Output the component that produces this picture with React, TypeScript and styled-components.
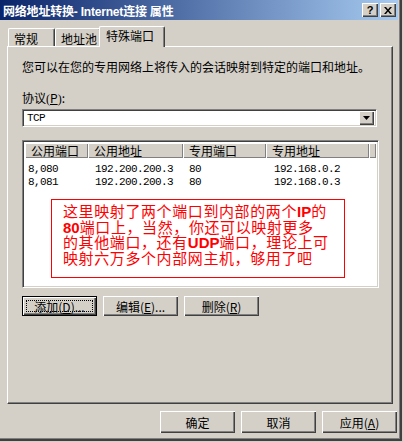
import React from "react";
import styled, { createGlobalStyle } from "styled-components";

const GlobalStyle = createGlobalStyle`
  html, body {
    margin: 0;
    padding: 0;
    background: #d4d0c8;
  }
  body {
    font-family: "Noto Sans CJK SC", "Liberation Sans", sans-serif;
    font-size: 12px;
    color: #000000;
  }
`;

const Window = styled.div`
  width: 403px;
  height: 442px;
  box-sizing: border-box;
  padding: 0 5px 4px 0;
  background: #d4d0c8;
  display: flex;
  flex-direction: column;
  box-shadow: inset -1px -1px #d4d0c8, inset -3px -3px #404040,
    inset -4px -4px #808080;
`;

const TitleBar = styled.div`
  height: 20px;
  display: flex;
  align-items: center;
  justify-content: space-between;
  padding: 0 2px 0 3px;
  background: linear-gradient(to right, #0a246a, #a6caf0);
`;

const Title = styled.span`
  color: #ffffff;
  font-weight: 700;
  font-size: 12px;
  font-family: "Liberation Sans", "Noto Sans CJK SC", sans-serif;
  letter-spacing: -0.2px;
`;

const TitleButtons = styled.div`
  display: flex;
  gap: 2px;
`;

const CaptionButton = styled.div`
  width: 16px;
  height: 14px;
  box-sizing: border-box;
  background: #d4d0c8;
  display: flex;
  align-items: center;
  justify-content: center;
  font: 700 11px "Liberation Sans", sans-serif;
  box-shadow: inset 1px 1px #ffffff, inset -1px -1px #404040,
    inset -2px -2px #808080;
`;

const Body = styled.div`
  padding: 6px 0 0 7px;
  display: flex;
  flex-direction: column;
`;

const TabStrip = styled.div`
  display: flex;
  align-items: flex-end;
  height: 20px;
  padding-left: 1px;
  position: relative;
  z-index: 1;
`;

const Tab = styled.div<{ $active?: boolean; $w: number }>`
  width: ${(p) => p.$w}px;
  height: ${(p) => (p.$active ? 21 : 18)}px;
  box-sizing: border-box;
  margin: ${(p) => (p.$active ? "0 -2px -1px -2px" : "0")};
  padding: ${(p) => (p.$active ? "1px 0 0 6px" : "2px 0 0 5px")};
  background: #d4d0c8;
  border-top: 1px solid #ffffff;
  border-left: 1px solid #ffffff;
  border-right: 1px solid #404040;
  border-radius: 2px 2px 0 0;
  box-shadow: inset -1px 0 #808080;
  line-height: 16px;
  white-space: nowrap;
`;

const Panel = styled.div`
  width: 386px;
  height: 358px;
  box-sizing: border-box;
  padding: 13px 13px 0 14px;
  border-top: 1px solid #ffffff;
  border-left: 1px solid #ffffff;
  border-right: 1px solid #404040;
  border-bottom: 1px solid #404040;
  box-shadow: inset -1px -1px #808080;
  display: flex;
  flex-direction: column;
`;

const Line = styled.div<{ $mt?: number }>`
  margin-top: ${(p) => p.$mt || 0}px;
  line-height: 14px;
  white-space: nowrap;
`;

const Sunken = styled.div`
  box-sizing: border-box;
  border: 1px solid;
  border-color: #808080 #ffffff #ffffff #808080;
  box-shadow: inset 1px 1px #404040, inset -1px -1px #d4d0c8;
  background: #ffffff;
`;

const Combo = styled(Sunken)`
  width: 355px;
  height: 18px;
  margin-top: 3px;
  padding: 2px 2px 2px 4px;
  display: flex;
  align-items: center;
  justify-content: space-between;
`;

const Mono = styled.span`
  font-family: "Liberation Mono", monospace;
  font-size: 11px;
  letter-spacing: -0.6px;
`;

const DropButton = styled.div`
  width: 15px;
  height: 14px;
  box-sizing: border-box;
  background: #d4d0c8;
  display: flex;
  align-items: center;
  justify-content: center;
  box-shadow: inset 1px 1px #ffffff, inset -1px -1px #404040,
    inset -2px -2px #808080;
`;

const List = styled(Sunken)`
  width: 357px;
  height: 148px;
  margin-top: 13px;
  padding: 2px;
  position: relative;
`;

const Header = styled.div`
  display: flex;
  height: 15px;
`;

const HeadCell = styled.div<{ $w?: number }>`
  ${(p) => (p.$w ? `width: ${p.$w}px;` : "flex: 1;")}
  box-sizing: border-box;
  background: #d4d0c8;
  padding-left: 6px;
  line-height: 15px;
  box-shadow: inset 1px 1px #ffffff, inset -1px -1px #808080;
`;

const Rows = styled.div`
  padding-top: 2px;
`;

const Row = styled.div`
  display: flex;
  height: 13px;
  line-height: 13px;
`;

const Cell = styled.div<{ $w: number; $pl: number }>`
  width: ${(p) => p.$w}px;
  padding-left: ${(p) => p.$pl}px;
  box-sizing: border-box;
  white-space: nowrap;
`;

const Note = styled.div`
  position: absolute;
  left: 28px;
  top: 58px;
  width: 294px;
  height: 79px;
  box-sizing: border-box;
  border: 1px solid #ff0000;
  padding: 4px 0 0 11px;
  color: #ff0000;
  font-family: "Liberation Sans", "Noto Sans CJK SC", sans-serif;
  font-size: 15px;
  letter-spacing: 0.6px;
  line-height: 15.5px;
  white-space: nowrap;
  b {
    font-weight: 700;
    letter-spacing: 0;
  }
`;

const ButtonRow = styled.div<{ $end?: boolean; $mt?: number }>`
  display: flex;
  gap: 6px;
  margin-top: ${(p) => p.$mt || 0}px;
  justify-content: ${(p) => (p.$end ? "flex-end" : "flex-start")};
`;

const Button = styled.div<{ $default?: boolean; $h: number }>`
  width: 75px;
  height: ${(p) => p.$h}px;
  box-sizing: border-box;
  background: #d4d0c8;
  display: flex;
  align-items: center;
  justify-content: center;
  white-space: nowrap;
  position: relative;
  border: ${(p) => (p.$default ? "1px solid #000000" : "none")};
  box-shadow: inset 1px 1px #ffffff, inset -1px -1px #404040,
    inset -2px -2px #808080;
  u {
    text-decoration: underline;
  }
`;

const Focus = styled.span`
  position: absolute;
  inset: 3px;
  border: 1px dotted #000000;
`;

const Paren = styled.span`
  font-family: "Liberation Serif", serif;
  font-size: 12px;
`;

const Footer = styled(ButtonRow)`
  padding-right: 1px;
`;

const columns = [
  { w: 63, pl: 3, title: "公用端口" },
  { w: 95, pl: 7, title: "公用地址" },
  { w: 83, pl: 6, title: "专用端口" },
  { w: 103, pl: 8, title: "专用地址" },
];

const rows = [
  ["8,080", "192.200.200.3", "80", "192.168.0.2"],
  ["8,081", "192.200.200.3", "80", "192.168.0.3"],
];

const App = () => {
  return (
    <>
      <GlobalStyle />
      <Window>
        <TitleBar>
          <Title>网络地址转换- Internet连接 属性</Title>
          <TitleButtons>
            <CaptionButton>?</CaptionButton>
            <CaptionButton>
              <svg width="8" height="7" viewBox="0 0 8 7">
                <path d="M0 0h2l2 2.5L6 0h2L5 3.5 8 7H6L4 4.5 2 7H0l3-3.5z" fill="#000" />
              </svg>
            </CaptionButton>
          </TitleButtons>
        </TitleBar>
        <Body>
          <TabStrip>
            <Tab $w={47}>常规</Tab>
            <Tab $w={46}>地址池</Tab>
            <Tab $w={66} $active>
              特殊端口
            </Tab>
          </TabStrip>
          <Panel>
            <Line>您可以在您的专用网络上将传入的会话映射到特定的端口和地址。</Line>
            <Line $mt={17}>
              协议<Paren>(</Paren>
              <u>P</u>
              <Paren>)</Paren>:
            </Line>
            <Combo>
              <Mono>TCP</Mono>
              <DropButton>
                <svg width="7" height="4" viewBox="0 0 7 4">
                  <path d="M0 0h7L3.5 4z" fill="#000" />
                </svg>
              </DropButton>
            </Combo>
            <List>
              <Header>
                {columns.map((c, i) => (
                  <HeadCell key={i} $w={c.w}>
                    {c.title}
                  </HeadCell>
                ))}
                <HeadCell />
              </Header>
              <Rows>
                {rows.map((r, i) => (
                  <Row key={i}>
                    {r.map((v, j) => (
                      <Cell key={j} $w={columns[j].w} $pl={columns[j].pl}>
                        <Mono>{v}</Mono>
                      </Cell>
                    ))}
                  </Row>
                ))}
              </Rows>
              <Note>
                这里映射了两个端口到内部的两个<b>IP</b>的
                <br />
                <b>80</b>端口上，当然，你还可以映射更多
                <br />
                的其他端口，还有<b>UDP</b>端口，理论上可
                <br />
                映射六万多个内部网主机，够用了吧
              </Note>
            </List>
            <ButtonRow $mt={8}>
              <Button $default $h={20}>
                <Focus />
                添加(<u>D</u>)...
              </Button>
              <Button $h={20}>
                编辑(<u>E</u>)...
              </Button>
              <Button $h={20}>
                删除(<u>R</u>)
              </Button>
            </ButtonRow>
          </Panel>
          <Footer $end $mt={7}>
            <Button $h={22}>确定</Button>
            <Button $h={22}>取消</Button>
            <Button $h={22}>
              应用(<u>A</u>)
            </Button>
          </Footer>
        </Body>
      </Window>
    </>
  );
};

export default App;
